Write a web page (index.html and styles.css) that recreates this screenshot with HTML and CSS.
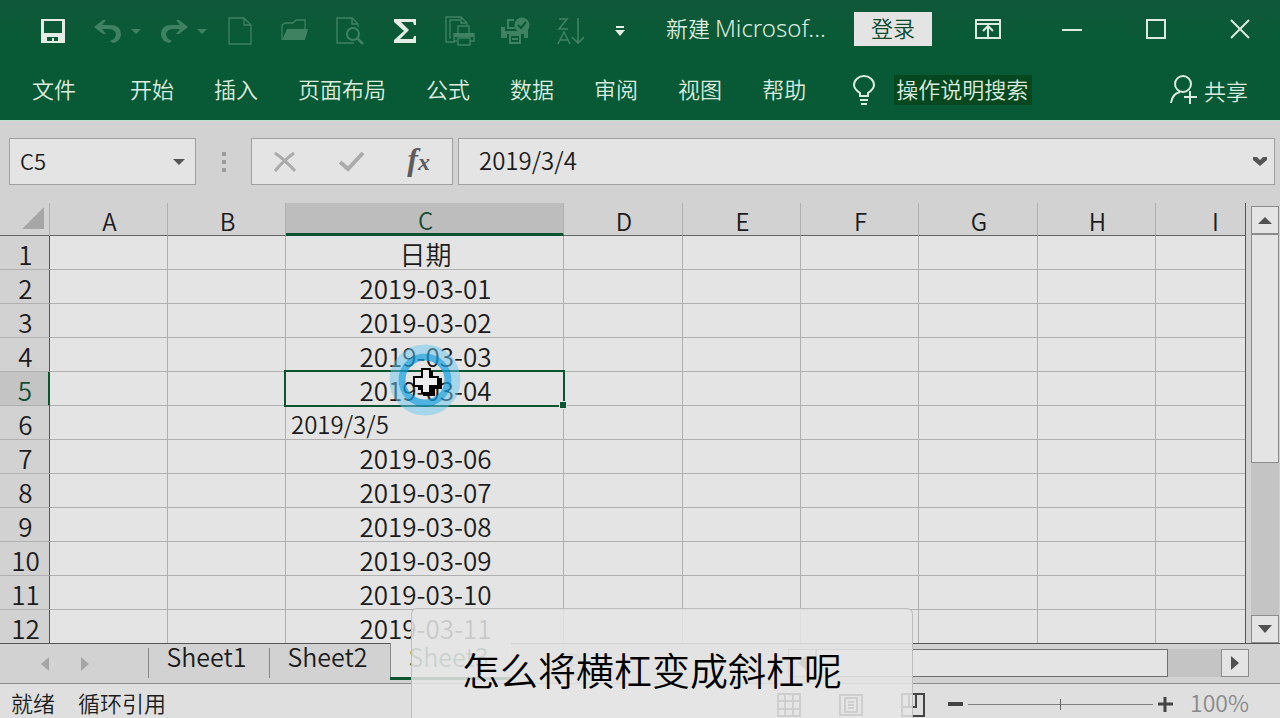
FILE: index.html
```html
<!DOCTYPE html>
<html lang="zh-CN">
<head>
<meta charset="utf-8">
<meta name="viewport" content="width=device-width, initial-scale=1">
<title>新建 Microsoft Excel 工作表</title>
<link rel="stylesheet" href="styles.css">
</head>
<body>
<div class="app">
  <header class="ribbon">
    <div class="title-bar">
      <div class="quick-access">
        <button class="tool on" aria-label="保存"><svg width="24" height="24" viewBox="0 0 24 24"><path fill="currentColor" fill-rule="evenodd" d="M0 0H24V24H0ZM3 2V14H21V2ZM6 18V22H11V19H13V22H17V18Z"/></svg></button>
        <div class="split">
          <button class="tool" aria-label="撤消"><svg width="28" height="24" viewBox="0 0 28 24"><path fill="currentColor" d="M0 8 9 1 12 1 8 6H16Q27 6 27 15 27 22 19 24L16 22Q22 20 22 15 21 10 14 10H8L12 15 9 15Z"/></svg></button>
          <button class="caret" aria-label="撤消列表"><svg width="10" height="5" viewBox="0 0 10 5"><path fill="currentColor" d="M0 0H10L5 5Z"/></svg></button>
        </div>
        <div class="split">
          <button class="tool" aria-label="恢复"><svg width="28" height="24" viewBox="0 0 28 24"><path fill="currentColor" d="M28 8 19 1 16 1 20 6H12Q1 6 1 15 1 22 9 24L12 22Q6 20 6 15 7 10 14 10H20L16 15 19 15Z"/></svg></button>
          <button class="caret" aria-label="恢复列表"><svg width="10" height="5" viewBox="0 0 10 5"><path fill="currentColor" d="M0 0H10L5 5Z"/></svg></button>
        </div>
        <button class="tool" aria-label="新建"><svg width="24" height="28" viewBox="0 0 24 28"><path fill="none" stroke="currentColor" stroke-width="1.3" d="M1 1H16L23 8V27H1ZM16 1V8H23"/></svg></button>
        <button class="tool" aria-label="打开"><svg width="28" height="24" viewBox="0 0 28 24"><path fill="none" stroke="currentColor" stroke-width="1.3" d="M1 21V6L4 4H12L15 1H24V11"/><path fill="currentColor" d="M6 10H27L24 21H1Z"/></svg></button>
        <button class="tool" aria-label="打印预览"><svg width="28" height="28" viewBox="0 0 28 28"><path fill="none" stroke="currentColor" stroke-width="1.4" d="M18 26H1V1H16L22 7V10M16 1V7H22"/><circle cx="17" cy="17" r="6" fill="none" stroke="currentColor" stroke-width="2"/><path fill="none" stroke="currentColor" stroke-width="2.5" d="m21 21 6 6"/></svg></button>
        <button class="tool on" aria-label="自动求和"><svg width="24" height="26" viewBox="0 0 24 26"><path fill="currentColor" d="M1 1H23V7H21L20 4H8L16 12 7 21H20L21 18H23V25H1V22L11 13 1 4Z"/></svg></button>
        <button class="tool" aria-label="打印预览和打印"><svg width="30" height="30" viewBox="0 0 30 30"><g fill="none" stroke="currentColor" stroke-width="1.4"><path d="M10 26H1V1H16L22 7V9M5 23V4H15M16 1V7H22M13 17V10H24V17M12 25H9V18H29V25H25"/><path d="M13 22H25V29H13Z"/></g><path fill="currentColor" d="M9 17H29V21H9Z"/></svg></button>
        <button class="tool" aria-label="快速打印"><svg width="30" height="28" viewBox="0 0 30 28"><path fill="none" stroke="currentColor" stroke-width="2" d="M14 3H8V11H15"/><path fill="currentColor" d="M1 10H5V14H25L28 12V21H24V17H7V21H1Z"/><path fill="none" stroke="currentColor" stroke-width="2" d="M10 18H20V26H10ZM12 22H18"/><circle cx="22" cy="8" r="7.5" fill="currentColor"/><path fill="none" stroke="#075a35" stroke-width="2" d="m18 8 3 3 5-6"/></svg></button>
        <button class="tool" aria-label="降序排序"><svg width="27" height="28" viewBox="0 0 27 28"><path fill="none" stroke="currentColor" stroke-width="1.6" d="M2 2H10L2 12H11M1 27 7 15 13 27M3 23H11M21 1V26M15 20 21 26 27 20"/></svg></button>
        <button class="customize on" aria-label="自定义快速访问工具栏"><svg width="10" height="10" viewBox="0 0 10 10"><path fill="currentColor" d="M1 0H9V2H1ZM0 4H10L5 10Z"/></svg></button>
      </div>
      <div class="doc-title">新建 <span class="latin">Microsof...</span></div>
      <div class="window-tools">
        <button class="login">登录</button>
        <button class="window-button" aria-label="功能区显示选项"><svg width="26" height="20" viewBox="0 0 26 20"><path fill="none" stroke="currentColor" stroke-width="2" d="M1 1H25V19H1ZM1 5H25M13 18V8M8 12 13 7 18 12"/></svg></button>
        <button class="window-button" aria-label="最小化"><svg width="20" height="20" viewBox="0 0 20 20"><path stroke="currentColor" stroke-width="2" d="M0 11H20"/></svg></button>
        <button class="window-button" aria-label="最大化"><svg width="20" height="20" viewBox="0 0 20 20"><path fill="none" stroke="currentColor" stroke-width="2" d="M1 1H19V19H1Z"/></svg></button>
        <button class="window-button" aria-label="关闭"><svg width="20" height="20" viewBox="0 0 20 20"><path stroke="currentColor" stroke-width="2" d="M1 1 19 19M19 1 1 19"/></svg></button>
      </div>
    </div>
    <nav class="tabs">
      <button class="tab file">文件</button>
      <button class="tab">开始</button>
      <button class="tab">插入</button>
      <button class="tab">页面布局</button>
      <button class="tab">公式</button>
      <button class="tab">数据</button>
      <button class="tab">审阅</button>
      <button class="tab">视图</button>
      <button class="tab">帮助</button>
      <button class="tell-me"><svg width="24" height="30" viewBox="0 0 24 30"><path fill="none" stroke="currentColor" stroke-width="2" d="M8 21V18Q2 14 2 10A10 9 0 0 1 22 10Q22 14 16 18V21ZM8 25H16M9 29H15"/></svg><span class="tell-label">操作说明搜索</span></button>
      <button class="share"><svg width="28" height="30" viewBox="0 0 28 30"><g fill="none" stroke="currentColor" stroke-width="2"><circle cx="13" cy="9" r="8"/><path d="M1 28Q2 19 10 17M14 22H27M20 16V29"/></g></svg><span>共享</span></button>
    </nav>
  </header>

  <section class="formula-bar">
    <div class="name-box">
      <input class="name-input" aria-label="名称框" value="C5">
      <button class="name-drop" aria-label="名称列表"><svg width="12" height="6" viewBox="0 0 12 6"><path fill="currentColor" d="M0 0H12L6 6Z"/></svg></button>
    </div>
    <div class="grip" aria-hidden="true"><i></i><i></i><i></i></div>
    <div class="formula-tools">
      <button class="formula-tool" aria-label="取消"><svg width="24" height="22" viewBox="0 0 24 22"><path fill="none" stroke="currentColor" stroke-width="3" d="M2 2Q12 9 22 20M21 2Q10 10 2 20"/></svg></button>
      <button class="formula-tool" aria-label="输入"><svg width="26" height="20" viewBox="0 0 26 20"><path fill="none" stroke="currentColor" stroke-width="4" d="M1 10 9 17 24 1"/></svg></button>
      <button class="formula-tool fx" aria-label="插入函数">f<span class="fx-x">x</span></button>
    </div>
    <div class="formula-field">
      <input class="formula-input" aria-label="编辑栏" value="2019/3/4">
      <button class="name-drop" aria-label="展开编辑栏"><svg width="14" height="9" viewBox="0 0 14 9"><path fill="currentColor" d="M0 0H4L7 3 10 0H14V3L7 9 0 3Z"/></svg></button>
    </div>
  </section>

  <main class="workspace">
    <div class="grid-view">
      <table class="grid">
        <colgroup><col class="col-head"><col class="col-even"><col class="col-even"><col class="col-date"><col class="col-odd"><col class="col-even"><col class="col-even"><col class="col-odd"><col class="col-even"><col class="col-even"></colgroup>
        <thead>
          <tr><th class="corner"><svg width="22" height="22" viewBox="0 0 22 22"><path fill="#a6a6a6" d="M22 0V22H0Z"/></svg></th><th>A</th><th>B</th><th class="picked">C</th><th>D</th><th>E</th><th>F</th><th>G</th><th>H</th><th>I</th></tr>
        </thead>
        <tbody>
          <tr><th>1</th><td></td><td></td><td>日期</td><td></td><td></td><td></td><td></td><td></td><td></td></tr>
          <tr><th>2</th><td></td><td></td><td>2019-03-01</td><td></td><td></td><td></td><td></td><td></td><td></td></tr>
          <tr><th>3</th><td></td><td></td><td>2019-03-02</td><td></td><td></td><td></td><td></td><td></td><td></td></tr>
          <tr><th>4</th><td></td><td></td><td>2019-03-03</td><td></td><td></td><td></td><td></td><td></td><td></td></tr>
          <tr><th class="picked-row">5</th><td></td><td></td><td class="active-cell">2019-03-04<span class="fill-handle"></span>
            <svg class="pointer" width="72" height="72" viewBox="0 0 72 72"><circle cx="36" cy="36" r="31" fill="none" stroke="#69c8ef" stroke-opacity=".5" stroke-width="9"/><circle cx="36" cy="36" r="23" fill="none" stroke="#159fe0" stroke-opacity=".72" stroke-width="7"/><path d="M35 27H44V34H53V45H46V52H34V46H29V39H35Z" fill="#000"/><path d="M33 25H41V33H49V42H41V49H33V42H25V33H33Z" fill="#eee" stroke="#000" stroke-width="2"/></svg>
          </td><td></td><td></td><td></td><td></td><td></td><td></td></tr>
          <tr><th>6</th><td></td><td></td><td class="text-cell">2019/3/5</td><td></td><td></td><td></td><td></td><td></td><td></td></tr>
          <tr><th>7</th><td></td><td></td><td>2019-03-06</td><td></td><td></td><td></td><td></td><td></td><td></td></tr>
          <tr><th>8</th><td></td><td></td><td>2019-03-07</td><td></td><td></td><td></td><td></td><td></td><td></td></tr>
          <tr><th>9</th><td></td><td></td><td>2019-03-08</td><td></td><td></td><td></td><td></td><td></td><td></td></tr>
          <tr><th>10</th><td></td><td></td><td>2019-03-09</td><td></td><td></td><td></td><td></td><td></td><td></td></tr>
          <tr><th>11</th><td></td><td></td><td>2019-03-10</td><td></td><td></td><td></td><td></td><td></td><td></td></tr>
          <tr><th>12</th><td></td><td></td><td>2019-03-11</td><td></td><td></td><td></td><td></td><td></td><td></td></tr>
        </tbody>
      </table>
    </div>
    <div class="v-scroll">
      <button class="scroll-button" aria-label="向上滚动"><svg width="14" height="7" viewBox="0 0 14 7"><path fill="currentColor" d="M0 7 7 0 14 7Z"/></svg></button>
      <div class="v-track"><div class="v-thumb"></div></div>
      <button class="scroll-button" aria-label="向下滚动"><svg width="14" height="8" viewBox="0 0 14 8"><path fill="currentColor" d="M0 0H14L7 8Z"/></svg></button>
    </div>
  </main>

  <section class="sheet-bar">
    <div class="sheet-nav">
      <button class="nav-arrow" aria-label="上一个工作表"><svg width="8" height="14" viewBox="0 0 8 14"><path fill="currentColor" d="M8 0V14L0 7Z"/></svg></button>
      <button class="nav-arrow" aria-label="下一个工作表"><svg width="8" height="14" viewBox="0 0 8 14"><path fill="currentColor" d="M0 0V14L8 7Z"/></svg></button>
    </div>
    <button class="sheet-tab">Sheet1</button>
    <button class="sheet-tab">Sheet2</button>
    <button class="sheet-tab current">Sheet3</button>
    <div class="sheet-add"><button class="nav-arrow" aria-label="新工作表"><svg width="24" height="24" viewBox="0 0 24 24"><path fill="none" stroke="currentColor" stroke-width="2" d="M12 1A11 11 0 1 0 12 23 11 11 0 1 0 12 1M6 12H18M12 6V18"/></svg></button></div>
    <div class="h-scroll">
      <button class="scroll-button" aria-label="向左滚动"><svg width="8" height="14" viewBox="0 0 8 14"><path fill="currentColor" d="M8 0V14L0 7Z"/></svg></button>
      <div class="h-track"><div class="h-thumb"></div></div>
      <button class="scroll-button" aria-label="向右滚动"><svg width="8" height="14" viewBox="0 0 8 14"><path fill="currentColor" d="M0 0V14L8 7Z"/></svg></button>
    </div>
  </section>

  <footer class="status-bar">
    <span>就绪</span>
    <span>循环引用</span>
    <div class="views">
      <button class="view" aria-label="普通"><svg width="24" height="24" viewBox="0 0 24 24"><path fill="none" stroke="currentColor" stroke-width="2" d="M1 1H23V23H1ZM1 8H23M1 16H23M8 1V23M16 1V23"/></svg></button>
      <button class="view" aria-label="页面布局视图"><svg width="24" height="24" viewBox="0 0 24 24"><path fill="none" stroke="currentColor" stroke-width="2" d="M1 2H23V22H1ZM6 5H18V19H6ZM9 9H15M9 12H15M9 15H15"/></svg></button>
      <button class="view" aria-label="分页预览"><svg width="24" height="24" viewBox="0 0 24 24"><path fill="none" stroke="currentColor" stroke-width="2" d="M1 1H23V23H1ZM1 14H15V1M8 1V14"/></svg></button>
    </div>
    <div class="zoom">
      <button class="zoom-button" aria-label="缩小"><svg width="15" height="15" viewBox="0 0 15 15"><path stroke="currentColor" stroke-width="4" d="M0 7H15"/></svg></button>
      <input class="zoom-range" type="range" min="0" max="200" value="100" aria-label="显示比例">
      <button class="zoom-button" aria-label="放大"><svg width="15" height="15" viewBox="0 0 15 15"><path stroke="currentColor" stroke-width="3" d="M0 7H15M7 0V15"/></svg></button>
      <span class="zoom-value">100%</span>
    </div>
  </footer>

  <div class="caption"><p class="caption-text">怎么将横杠变成斜杠呢</p></div>
</div>
</body>
</html>
```

FILE: styles.css
```css
* { box-sizing: border-box; }

body {
  margin: 0;
  font-family: "Noto Sans CJK SC", sans-serif;
  font-size: 22px;
  font-weight: 350;
  line-height: 32px;
  color: #1c1c1c;
  background: #d2d2d2;
}

button, input {
  margin: 0;
  padding: 0;
  border: 0;
  background: none;
  color: inherit;
  font: inherit;
}

svg { display: block; flex: none; }

.app {
  position: relative;
  display: flex;
  flex-direction: column;
  height: 100vh;
  overflow: hidden;
}

/* Ribbon */
.ribbon {
  flex: none;
  height: 120px;
  color: #dcebdf;
  background: linear-gradient(#10583a, #075a35 40%);
}

.title-bar {
  display: flex;
  align-items: center;
  height: 60px;
  padding-right: 8px;
}

.quick-access {
  display: flex;
  align-items: center;
  gap: 25px;
  height: 100%;
  padding: 2px 0 0 38px;
  color: #3f8261;
}

.on { color: #e4ece5; }

.tool {
  display: flex;
  justify-content: center;
  width: 30px;
}

.split {
  display: flex;
  align-items: center;
  gap: 8px;
  width: 50px;
  margin-right: -9px;
}

.customize {
  display: flex;
  justify-content: center;
  width: 20px;
}

.doc-title {
  margin-left: 36px;
  padding-bottom: 6px;
  white-space: nowrap;
}

.latin { font-family: "Noto Sans", sans-serif; font-size: 24px; }

.window-tools {
  display: flex;
  align-items: center;
  gap: 20px;
  margin-left: auto;
  padding-bottom: 3px;
}

.login {
  width: 78px;
  height: 34px;
  margin-right: 4px;
  padding-bottom: 4px;
  line-height: 30px;
  color: #0b4a2c;
  background: #e4e4e4;
}

.window-button {
  display: flex;
  justify-content: center;
  width: 64px;
}

.tabs {
  display: flex;
  align-items: center;
  gap: 40px;
  height: 60px;
  padding: 0 32px;
}

.tab { padding-bottom: 4px; white-space: nowrap; }
.file { margin-right: 14px; }

.tell-me {
  display: flex;
  align-items: center;
  gap: 18px;
  margin-left: 6px;
}

.tell-label {
  padding: 0 4px 3px 2px;
  background: #05471f;
  line-height: 27px;
}

.share {
  display: flex;
  align-items: center;
  gap: 6px;
  margin-left: auto;
}

/* Formula bar */
.formula-bar {
  display: flex;
  flex: none;
  height: 83px;
  padding: 17px 5px 18px 9px;
  border-top: 1px solid #bfe0cd;
}

.name-box, .formula-tools, .formula-field {
  display: flex;
  align-items: center;
  border: 1px solid #a0a0a0;
  background: #e4e4e4;
}

.name-box { width: 187px; padding: 0 10px; }
.name-input { flex: 1; min-width: 0; padding-bottom: 3px; }
.name-drop { color: #555; }

.grip {
  display: grid;
  gap: 4px;
  place-content: center;
  width: 55px;
}

.grip i { width: 4px; height: 4px; background: #999; }

.formula-tools { width: 202px; color: #ababab; }

.formula-tool {
  display: flex;
  flex: 1;
  justify-content: center;
}

.fx {
  align-items: baseline;
  padding-bottom: 2px;
  color: #5c5c5c;
  font: italic bold 32px/32px "Liberation Serif", serif;
}

.fx-x { font-size: 24px; }

.formula-field {
  flex: 1;
  margin-left: 5px;
  padding: 0 7px 0 20px;
}

.formula-input { flex: 1; min-width: 0; padding-bottom: 4px; font-size: 24px; }

/* Worksheet */
.workspace {
  display: flex;
  flex: 1;
  gap: 4px;
  min-height: 0;
}

.grid-view {
  flex: 1;
  min-width: 0;
  overflow: hidden;
  border-right: 1px solid #555;
}

.grid {
  width: 1274px;
  table-layout: fixed;
  border-spacing: 0;
  font-size: 26px;
  line-height: 31px;
}

.col-head { width: 50px; }
.col-even { width: 118px; }
.col-odd { width: 119px; }
.col-date { width: 278px; }

.grid th, .grid td {
  height: 34px;
  padding: 2px 0 0 2px;
  border-right: 1px solid #b0b0b0;
  border-bottom: 1px solid #b0b0b0;
  font-weight: inherit;
  text-align: center;
  white-space: nowrap;
}

.grid td { background: #e4e4e4; }

.grid thead th {
  height: 33px;
  padding-top: 3px;
  font-size: 24px;
  line-height: 29px;
  border-bottom-color: #666;
  background: #d2d2d2;
}

.grid tbody th { border-right-color: #555; }

.grid thead .corner { padding: 0 5px 3px 22px; }

.grid thead .picked {
  border-bottom: 3px solid #0a5432;
  line-height: 27px;
  color: #164f35;
  background: #bdbdbd;
}

.grid tbody .picked-row {
  border-right: 2px solid #0a5432;
  color: #164f35;
  background: #c4c4c4;
}

.grid .text-cell {
  padding-left: 5px;
  font-size: 24px;
  text-align: left;
}

.grid .active-cell { position: relative; }

.active-cell::after {
  content: "";
  position: absolute;
  inset: -2px;
  border: 2px solid #0a5432;
}

.fill-handle {
  position: absolute;
  z-index: 1;
  right: -4px;
  bottom: -4px;
  width: 8px;
  height: 8px;
  border: 1px solid #e4e4e4;
  background: #0a5432;
}

.pointer {
  position: absolute;
  z-index: 2;
  top: -28px;
  left: 103px;
}

/* Scroll bars */
.scroll-button {
  display: grid;
  flex: none;
  place-content: center;
  width: 28px;
  height: 28px;
  border: 1px solid #8c8c8c;
  color: #505050;
  background: #e4e4e4;
}

.v-scroll {
  display: flex;
  flex-direction: column;
  width: 30px;
  padding: 3px 1px 0;
}

.v-track { flex: 1; background: #c4c4c4; }

.v-thumb {
  height: 60%;
  border: 1px solid #8c8c8c;
  background: #e4e4e4;
}

.h-scroll {
  display: flex;
  flex: none;
  width: 36%;
  margin: 6px 31px 0 auto;
}

.h-track { flex: 1; background: #c4c4c4; }

.h-thumb {
  width: 87%;
  height: 28px;
  border: 1px solid #707070;
  background: #e4e4e4;
}

/* Sheet tabs */
.sheet-bar {
  display: flex;
  flex: none;
  align-items: flex-start;
  height: 41px;
  border-bottom: 1px solid #8c8c8c;
  box-shadow: inset 0 1px #555;
}

.sheet-nav {
  display: flex;
  gap: 32px;
  width: 148px;
  padding: 14px 41px;
}

.nav-arrow { color: #a6a6a6; }

.sheet-tab {
  position: relative;
  width: 121px;
  height: 37px;
  padding: 0 4px 10px 0;
  font-size: 25px;
  line-height: 27px;
}

.sheet-tab::before {
  content: "";
  position: absolute;
  top: 5px;
  bottom: 2px;
  left: 0;
  border-left: 1px solid #888;
}

.current {
  padding-bottom: 7px;
  border-bottom: 3px solid #0a5432;
  color: #1c6040;
  background: #e4e4e4;
}

.current::before { top: 0; bottom: 0; }
.sheet-add { padding: 8px 48px; }

/* Status bar */
.status-bar {
  display: flex;
  flex: none;
  align-items: center;
  gap: 23px;
  height: 34px;
  padding: 2px 31px 0 11px;
  background: #dfdfdf;
}

.views {
  display: flex;
  gap: 38px;
  margin-left: auto;
  padding-top: 5px;
  color: #444;
}

.zoom { display: flex; align-items: center; gap: 5px; }
.zoom-button { padding-top: 4px; color: #444; }

.zoom-range {
  width: 185px;
  height: 12px;
  margin-top: 4px;
  appearance: none;
  background: linear-gradient(#808080, #808080) center / 100% 1px no-repeat;
}

.zoom-range::-webkit-slider-thumb {
  appearance: none;
  width: 1px;
  height: 11px;
  background: #666;
}

.zoom-value { margin-left: 12px; font-size: 23px; color: #8a8a8a; }

/* Subtitle */
.caption {
  position: absolute;
  z-index: 3;
  bottom: 0;
  left: calc(50% - 229px);
  width: 502px;
  height: 110px;
  padding: 34px 50px 0;
  border: 1px solid #bdbdbd;
  border-bottom: 0;
  border-radius: 6px 6px 0 0;
  background: rgb(229 229 229 / 86%);
}

.caption-text {
  margin: 0;
  color: #000;
  font-size: 38px;
  line-height: 52px;
  white-space: nowrap;
}
```
